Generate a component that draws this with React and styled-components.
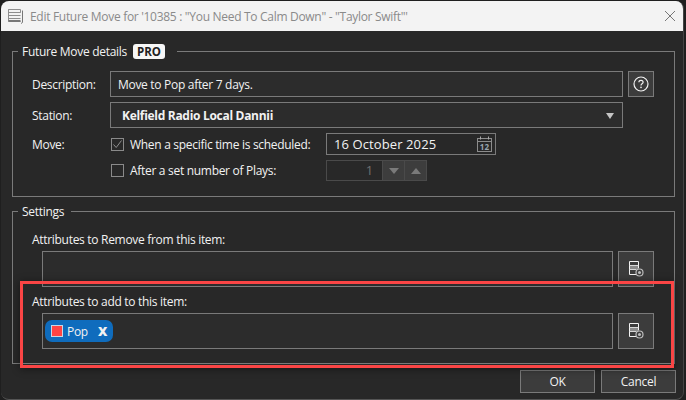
import React from 'react'
import styled, { createGlobalStyle } from 'styled-components'

const Global = createGlobalStyle`
  html, body {
    margin: 0;
    height: 400px;
    overflow: hidden;
    background: #1f1f1f;
  }
  * { box-sizing: border-box; }
`

const Dialog = styled.div`
  position: relative;
  width: 683px;
  height: 399px;
  margin: 1px 0 0 1px;
  background: #282828;
  border-radius: 8px;
  border-bottom: 1px solid #555;
  border-right: 1px solid #444;
  font-family: "Open Sans", "Liberation Sans", sans-serif;
  font-size: 12px;
  letter-spacing: -0.3px;
  color: #f2f2f2;
  overflow: hidden;
`

const TitleBar = styled.div`
  display: flex;
  align-items: center;
  height: 30px;
  padding: 0 7px 0 6px;
  background: #f3f3f3;
  color: #8a8a8a;
  gap: 5px;
`

const Title = styled.div`
  flex: 1;
  font-size: 12px;
`

const Content = styled.div`
  display: flex;
  flex-direction: column;
  padding: 11px 0 0 11px;
`

const Group = styled.fieldset`
  width: 663px;
  height: ${p => p.$height}px;
  margin: 0 0 ${p => p.$after || 0}px;
  padding: 0;
  border: 1px solid #7a7a7a;
  min-inline-size: 0;
`

const Legend = styled.legend`
  display: flex;
  align-items: center;
  gap: 6px;
  height: 18px;
  margin-left: 5px;
  padding: 0 7px 0 4px;
`

const Pro = styled.span`
  padding: 0 4px;
  margin-right: 5px;
  height: 15px;
  line-height: 15px;
  background: #f7f7f7;
  color: #222;
  font-weight: 700;
  font-size: 11.5px;
  letter-spacing: 0;
  border-radius: 3px;
`

const Details = styled.div`
  display: grid;
  grid-template-columns: 73px 513px 26px;
  column-gap: 5px;
  row-gap: 5px;
  padding: 11px 0 0 19px;
  grid-auto-rows: 26px;
`

const Label = styled.div`
  display: flex;
  align-items: center;
`

const Input = styled.div`
  display: flex;
  align-items: center;
  padding-left: ${p => p.$indent || 7}px;
  border: 1px solid #7a7a7a;
  background: #2c2c2c;
  font-weight: ${p => (p.$bold ? 700 : 400)};
  position: relative;
`

const Arrow = styled.span`
  position: absolute;
  right: 8px;
  top: 10px;
  width: 0;
  height: 0;
  border-left: 4px solid transparent;
  border-right: 4px solid transparent;
  border-top: 6px solid #c4c4c4;
`

const IconButton = styled.div`
  display: flex;
  align-items: center;
  justify-content: center;
  height: ${p => p.$size}px;
  width: ${p => p.$size}px;
  border: 1px solid #7a7a7a;
  background: #3c3c3c;
`

const MoveRows = styled.div`
  display: grid;
  grid-template-columns: 78px 216px 1fr;
  justify-items: start;
  padding: 5px 0 0 19px;
  grid-template-rows: 22px 21px;
  row-gap: 5px;
`

const Check = styled.label`
  display: flex;
  align-items: center;
  gap: 6px;
  margin-left: 1px;
`

const Box = styled.span`
  display: flex;
  width: 13px;
  height: 13px;
  border: 1px solid #8a8a8a;
`

const DateInput = styled.div`
  display: flex;
  align-items: center;
  justify-content: space-between;
  width: 170px;
  padding: 0 3px 0 7px;
  border: 1px solid #7a7a7a;
  font-size: 13px;
  letter-spacing: 0.1px;
`

const Spinner = styled.div`
  display: flex;
  height: 21px;
  border: 1px solid #4a4a4a;
`

const SpinValue = styled.div`
  width: 55px;
  padding-right: 9px;
  text-align: right;
  line-height: 19px;
  color: #707070;
  font-size: 13px;
`

const SpinButton = styled.div`
  display: flex;
  align-items: center;
  justify-content: center;
  width: 22px;
  background: #3d3d3d;
  border-left: 1px solid #4a4a4a;
`

const Tri = styled.span`
  width: 0;
  height: 0;
  border-left: 5px solid transparent;
  border-right: 5px solid transparent;
  ${p => (p.$up ? 'border-bottom' : 'border-top')}: 6px solid #7a7a7a;
`

const Settings = styled.div`
  display: flex;
  flex-direction: column;
  padding: 11px 0 0 19px;
`

const FieldLabel = styled.div`
  height: 17px;
  line-height: 17px;
  margin-bottom: 3px;
`

const FieldRow = styled.div`
  display: flex;
  gap: 5px;
  margin: 0 0 ${p => p.$after || 0}px 10px;
`

const TagField = styled.div`
  display: flex;
  align-items: center;
  width: 571px;
  height: 36px;
  padding-left: 2px;
  border: 1px solid #7a7a7a;
  background: #2c2c2c;
`

const Tag = styled.div`
  display: flex;
  align-items: center;
  width: 68px;
  height: 22px;
  padding-left: 6px;
  border-radius: 7px;
  background: #0f6cbd;
`

const Swatch = styled.span`
  width: 12px;
  height: 12px;
  margin-right: 4px;
  background: #ff4444;
  border: 1px solid #c9d6e4;
`

const TagClose = styled.span`
  margin-left: 10px;
  font-weight: 800;
  font-size: 13px;
`

const Footer = styled.div`
  display: flex;
  justify-content: flex-end;
  gap: 6px;
  margin-top: 6px;
  padding-right: 7px;
`

const Button = styled.div`
  width: 75px;
  height: 23px;
  line-height: 22px;
  text-align: center;
  border: 1px solid #7a7a7a;
  background: #3c3c3c;
`

// annotation drawn over the dialog
const Highlight = styled.div`
  position: absolute;
  left: 19px;
  top: 280px;
  width: 654px;
  height: 87px;
  border: 3px solid #fa4545;
  box-shadow: 0 1px 8px rgba(0, 0, 0, 0.45);
  pointer-events: none;
`

const AppIcon = () => (
  <svg width="18" height="18" viewBox="0 0 18 18" fill="none">
    <path d="M1.5 2.5h12v3h-12zM1.5 5.5h12M1.5 8.5h12M1.5 11.5h12" stroke="#8e8e8e" />
    <path d="M1.5 2.5v12h12" stroke="#8e8e8e" />
    <path d="M1.5 14h12" stroke="#777" strokeWidth="2" />
    <path d="M15.5 3.5v12l-1.500 1" stroke="#777" />
  </svg>
)

const CloseIcon = () => (
  <svg width="12" height="12" viewBox="0 0 12 12" fill="none">
    <path d="M1 1l10 10M11 1L1 11" stroke="#777" />
  </svg>
)

const HelpIcon = () => (
  <svg width="16" height="16" viewBox="0 0 16 16" fill="none">
    <circle cx="8" cy="8" r="7" stroke="#f2f2f2" strokeWidth="1.2" />
    <path d="M5.900 6.300c0-1.300 1-2 2.100-2s2.100.7 2.100 1.900c0 1.600-2.100 1.500-2.100 3.200" stroke="#f2f2f2" strokeWidth="1.200" />
    <circle cx="8" cy="11.400" r=".8" fill="#f2f2f2" />
  </svg>
)

const CheckMark = () => (
  <svg width="11" height="11" viewBox="0 0 11 11" fill="none">
    <path d="M1.500 5.500l2.700 3L9.500 1.500" stroke="#8f8f8f" />
  </svg>
)

const CalendarIcon = () => (
  <svg width="15" height="16" viewBox="0 0 15 16" fill="none">
    <rect x=".5" y="2.500" width="14" height="13" stroke="#8c8c8c" />
    <path d="M.5 5.500h14" stroke="#8c8c8c" />
    <path d="M3.500 .5v3M11.500 .5v3" stroke="#a8a8a8" />
    <text x="7.500" y="13.500" textAnchor="middle" fontSize="8" fontWeight="700" fontFamily="Open Sans, sans-serif" fill="#9aa6b0">12</text>
  </svg>
)

const ListGearIcon = () => (
  <svg width="16" height="16" viewBox="0 0 16 16" fill="none">
    <path d="M8 13.500H1.500V.5h9v7" stroke="#f2f2f2" />
    <path d="M1.500 4.500h9M1.500 8.500h7" stroke="#d8d8d8" />
    <rect x="2" y="5" width="8" height="3" fill="#8a8a8a" />
    <circle cx="11.500" cy="11.500" r="3.500" stroke="#bdbdbd" strokeWidth="1.200" fill="#3c3c3c" />
    <circle cx="11.500" cy="11.500" r="1.500" fill="#bdbdbd" />
  </svg>
)

export default function App() {
  return (
    <>
      <Global />
      <Dialog>
        <TitleBar>
          <AppIcon />
          <Title>Edit Future Move for '10385 : "You Need To Calm Down" - "Taylor Swift"'</Title>
          <CloseIcon />
        </TitleBar>
        <Content>
          <Group $height={155} $after={5}>
            <Legend>Future Move details <Pro>PRO</Pro></Legend>
            <Details>
              <Label>Description:</Label>
              <Input>Move to Pop after 7 days.</Input>
              <IconButton $size={26}><HelpIcon /></IconButton>
              <Label>Station:</Label>
              <Input $bold $indent={11}>Kelfield Radio Local Dannii<Arrow /></Input>
            </Details>
            <MoveRows>
              <Label>Move:</Label>
              <Check><Box><CheckMark /></Box>When a specific time is scheduled:</Check>
              <DateInput>16 October 2025<CalendarIcon /></DateInput>
              <span />
              <Check><Box />After a set number of Plays:</Check>
              <Spinner>
                <SpinValue>1</SpinValue>
                <SpinButton><Tri /></SpinButton>
                <SpinButton><Tri $up /></SpinButton>
              </Spinner>
            </MoveRows>
          </Group>
          <Group $height={162}>
            <Legend>Settings</Legend>
            <Settings>
              <FieldLabel>Attributes to Remove from this item:</FieldLabel>
              <FieldRow $after={6}>
                <TagField />
                <IconButton $size={36}><ListGearIcon /></IconButton>
              </FieldRow>
              <FieldLabel>Attributes to add to this item:</FieldLabel>
              <FieldRow>
                <TagField>
                  <Tag><Swatch />Pop<TagClose>X</TagClose></Tag>
                </TagField>
                <IconButton $size={36}><ListGearIcon /></IconButton>
              </FieldRow>
            </Settings>
          </Group>
          <Footer>
            <Button>OK</Button>
            <Button>Cancel</Button>
          </Footer>
        </Content>
        <Highlight />
      </Dialog>
    </>
  )
}
